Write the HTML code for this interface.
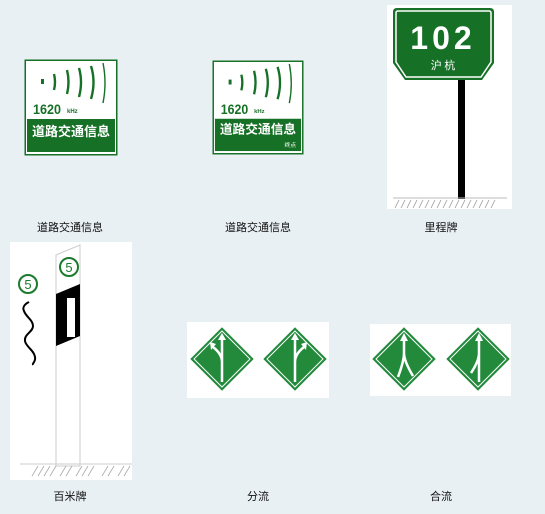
<!DOCTYPE html>
<html><head><meta charset="utf-8"><style>
body{margin:0;width:545px;height:514px;background:#e8f0f4;position:relative;overflow:hidden;font-family:"Liberation Sans","Noto Sans CJK SC",sans-serif}
.a{position:absolute}
.cap{position:absolute;font-size:11px;color:#111;text-align:center;width:120px}
</style></head><body>

<!-- sign 1 -->
<svg class="a" style="left:24px;top:59px" width="94" height="97" viewBox="0 0 94 97">
<rect x="0.5" y="0.5" width="93" height="96" fill="#167026"/>
<rect x="2" y="2" width="90" height="93" fill="#fff"/>
<rect x="3" y="60" width="88" height="33" fill="#167026"/>
<g fill="none" stroke="#167026" stroke-width="2.4">
<rect x="17" y="20" width="3" height="5" fill="#167026" stroke="none"/>
<path d="M30 15q2 8 0 16"/><path d="M43 11q3 12 0 24"/><path d="M55 9q4 14 0 29"/><path d="M67 7q5 16 0 33"/><path d="M79 4q4 20 0 40" stroke-width="1.4"/>
</g>
<text x="9" y="55" font-size="14" font-weight="bold" fill="#167026" textLength="28" lengthAdjust="spacingAndGlyphs">1620</text>
<text x="43" y="54" font-size="6" font-weight="bold" fill="#167026">kHz</text>
<text x="47" y="77" font-size="13" font-weight="bold" fill="#fff" text-anchor="middle" font-family="Noto Sans CJK SC,sans-serif">道路交通信息</text>
</svg>
<div class="cap" style="left:10px;top:219px">道路交通信息</div>

<!-- sign 2 -->
<svg class="a" style="left:212px;top:59px" width="92" height="97" viewBox="0 0 94 97">
<rect x="0.5" y="0.5" width="93" height="96" fill="#167026"/>
<rect x="2" y="2" width="90" height="93" fill="#fff"/>
<rect x="3" y="60" width="88" height="33" fill="#167026"/>
<g fill="none" stroke="#167026" stroke-width="2.4">
<rect x="17" y="20" width="3" height="5" fill="#167026" stroke="none"/>
<path d="M30 15q2 8 0 16"/><path d="M43 11q3 12 0 24"/><path d="M55 9q4 14 0 29"/><path d="M67 7q5 16 0 33"/><path d="M79 4q4 20 0 40" stroke-width="1.4"/>
</g>
<text x="9" y="55" font-size="14" font-weight="bold" fill="#167026" textLength="28" lengthAdjust="spacingAndGlyphs">1620</text>
<text x="43" y="54" font-size="6" font-weight="bold" fill="#167026">kHz</text>
<text x="47" y="75" font-size="13" font-weight="bold" fill="#fff" text-anchor="middle" font-family="Noto Sans CJK SC,sans-serif">道路交通信息</text>
<text x="80" y="89" font-size="6" fill="#fff" text-anchor="middle" font-family="Noto Sans CJK SC,sans-serif">终点</text>
</svg>
<div class="cap" style="left:198px;top:219px">道路交通信息</div>

<!-- sign 3 -->
<svg class="a" style="left:387px;top:5px" width="125" height="204" viewBox="0 0 125 204">
<rect width="125" height="204" fill="#fff"/>
<path d="M10 3h93q4 0 4 4v51l-12 17h-77l-12-17v-51q0-4 4-4z" fill="#167026"/>
<path d="M11 6h91q2 0 2 2v49l-10 15h-75l-10-15v-49q0-2 2-2z" fill="none" stroke="#fff" stroke-width="1.5"/>
<text x="56" y="44" font-size="32" font-weight="bold" fill="#fff" text-anchor="middle" letter-spacing="4">102</text>
<text x="56" y="64" font-size="11" fill="#fff" text-anchor="middle" font-family="Noto Sans CJK SC,sans-serif">沪 杭</text>
<rect x="71" y="75" width="7" height="119" fill="#000"/>
<line x1="6" y1="193" x2="120" y2="193" stroke="#bbb"/>
<path d="M8 203l4-8M14 203l4-8M20 203l4-8M26 203l4-8M32 203l4-8M38 203l4-8M44 203l4-8M50 203l4-8M56 203l4-8M62 203l4-8M68 203l4-8M74 203l4-8M80 203l4-8M86 203l4-8M92 203l4-8M98 203l4-8M104 203l4-8" stroke="#999" stroke-width="0.8"/>
</svg>
<div class="cap" style="left:381px;top:219px">里程牌</div>

<!-- hundred-meter post -->
<svg class="a" style="left:10px;top:242px" width="122" height="238" viewBox="0 0 122 238">
<rect width="122" height="238" fill="#fff"/>
<path d="M46 13l24-10v221h-24z" fill="#fff" stroke="#ccc"/>
<circle cx="59" cy="25" r="9" fill="#fff" stroke="#1b7a2c" stroke-width="2"/>
<text x="59" y="30" font-size="13" fill="#1b7a2c" text-anchor="middle">5</text>
<path d="M46 52l24-10v52l-24 10z" fill="#000"/>
<rect x="57" y="56" width="8" height="39" fill="#fff"/>
<circle cx="18" cy="42" r="9" fill="#fff" stroke="#1b7a2c" stroke-width="2"/>
<text x="18" y="47" font-size="13" fill="#1b7a2c" text-anchor="middle">5</text>
<path d="M19 60c-4 2-7 5-5 9c2 6 9 9 9 15c0 6-9 8-8 15c1 6 9 9 10 16c1 5-3 6-2 8" fill="none" stroke="#000" stroke-width="2"/>
<line x1="10" y1="222" x2="122" y2="222" stroke="#ccc"/>
<path d="M22 234l6-10M28 234l6-10M34 234l6-10M40 234l6-10M50 234l6-10M56 234l6-10M66 234l6-10M72 234l6-10M78 234l6-10M92 234l6-10M98 234l6-10M108 234l6-10M114 234l6-10" stroke="#aaa" stroke-width="0.8"/>
</svg>
<div class="cap" style="left:10px;top:488px">百米牌</div>

<!-- diverge -->
<svg class="a" style="left:187px;top:322px" width="142" height="76" viewBox="0 0 142 76">
<rect width="142" height="76" fill="#fff"/>
<g fill="#238a3c" stroke="#238a3c"><path d="M35 6l31 31l-31 31l-31-31z"/><path d="M108 6l31 31l-31 31l-31-31z"/></g>
<g fill="none" stroke="#fff" stroke-width="1"><path d="M35 9l28 28l-28 28l-28-28z"/><path d="M108 9l28 28l-28 28l-28-28z"/></g>
<g fill="none" stroke="#fff" stroke-width="2.5"><path d="M35 60v-45M35 40q0-8-9-15"/><path d="M108 60v-45M108 40q0-8 9-15"/></g>
<g fill="#fff"><path d="M35 11l-4 7h8z"/><path d="M23 20l1 8 5-6z"/><path d="M108 11l-4 7h8z"/><path d="M120 20l-1 8-5-6z"/></g>
</svg>
<div class="cap" style="left:198px;top:488px">分流</div>

<!-- merge -->
<svg class="a" style="left:370px;top:324px" width="141" height="72" viewBox="0 0 141 72">
<rect width="141" height="72" fill="#fff"/>
<g fill="#238a3c" stroke="#238a3c"><path d="M34 4l31 31l-31 31l-31-31z"/><path d="M108 4l31 31l-31 31l-31-31z"/></g>
<g fill="none" stroke="#fff" stroke-width="1"><path d="M34 7l28 28l-28 28l-28-28z"/><path d="M108 7l28 28l-28 28l-28-28z"/></g>
<g fill="none" stroke="#fff" stroke-width="2.5"><path d="M34 15v14q0 8-6 24M34 29q0 8 9 23"/><path d="M109 15v43M109 29q0 8-8 20"/></g>
<g fill="#fff"><path d="M34 9l-4 8h8z"/><path d="M109 9l-4 8h8z"/></g>
</svg>
<div class="cap" style="left:381px;top:488px">合流</div>

</body></html>
